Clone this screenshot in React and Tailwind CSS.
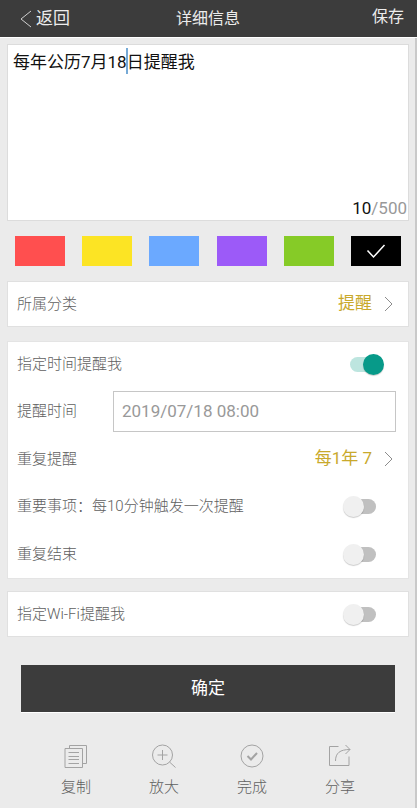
import React, { useState } from 'react';

const COLORS = [
  { name: '红色', bg: 'bg-[#ff4f4f]' },
  { name: '黄色', bg: 'bg-[#fce424]' },
  { name: '蓝色', bg: 'bg-[#6ba9ff]' },
  { name: '紫色', bg: 'bg-[#9c5af8]' },
  { name: '绿色', bg: 'bg-[#86cb27]' },
  { name: '黑色', bg: 'bg-black' },
];

const Chevron = () => (
  <svg className="ml-3 h-4 w-3" viewBox="0 0 12 16" fill="none" stroke="#8c8c8c" aria-hidden="true">
    <path d="M1 1 L8 8 L1 15" />
  </svg>
);

const Switch = ({ id, checked, onChange }) => (
  <input
    id={id}
    type="checkbox"
    role="switch"
    checked={checked}
    onChange={(e) => onChange(e.target.checked)}
    className={`relative h-[15px] w-[30px] appearance-none rounded-full before:absolute before:-top-[3px] before:size-[21px] before:rounded-full before:shadow-[0_1px_1px_rgba(0,0,0,0.2)] ${
      checked
        ? 'mr-4 bg-[#bde5df] before:-right-1 before:bg-[#079a89]'
        : 'mr-5 bg-[#c0c0c0] before:-left-[3px] before:bg-[#f0f0f0]'
    }`}
  />
);

const SwitchRow = ({ id, label, checked, onChange, className }) => (
  <div className={`flex items-center justify-between ${className}`}>
    <label htmlFor={id}>{label}</label>
    <Switch id={id} checked={checked} onChange={onChange} />
  </div>
);

const LinkRow = ({ label, value, className }) => (
  <button type="button" className={`flex w-full items-center text-left ${className}`}>
    <span className="flex-1">{label}</span>
    <span className="text-[17px] font-normal text-[#c9a92c]">{value}</span>
    <Chevron />
  </button>
);

const ToolButton = ({ label, children }) => (
  <button type="button" className="flex flex-col items-center gap-2">
    <svg className="size-6" viewBox="0 0 24 24" fill="none" stroke="#a3a3a3" aria-hidden="true">
      {children}
    </svg>
    <span>{label}</span>
  </button>
);

const App = () => {
  const [text, setText] = useState('每年公历7月18日提醒我');
  const [color, setColor] = useState('黑色');
  const [time, setTime] = useState('2019/07/18 08:00');
  const [timed, setTimed] = useState(true);
  const [important, setImportant] = useState(false);
  const [ends, setEnds] = useState(false);
  const [wifi, setWifi] = useState(false);

  return (
    <div className="min-h-screen bg-[#ebebeb] font-['Roboto','Noto_Sans_CJK_SC',sans-serif] text-[15px] font-light text-[#606060]">
      {/* Header */}
      <header className="grid h-[38px] grid-cols-3 items-center border-b border-white bg-[#3c3c3c] pr-[13px] pl-5 text-base font-normal text-[#ececec]">
        <button type="button" className="flex items-center gap-1 justify-self-start text-[17px]">
          <svg className="h-[18px] w-3" viewBox="0 0 12 18" fill="none" stroke="#cfcfcf" aria-hidden="true">
            <path d="M11 1 L1 9 L11 17" />
          </svg>
          返回
        </button>
        <h1 className="justify-self-center pr-2">详细信息</h1>
        <button type="button" className="justify-self-end pb-1">保存</button>
      </header>

      <main className="min-h-[calc(100vh-38px)] border-r-2 border-[#c9c9c9] pt-[6px] pr-[6px] pl-[7px]">
        {/* Note text */}
        <div className="relative flex h-[177px] flex-col border border-[#dcdcdc] bg-white text-[17px] font-normal">
          <textarea
            aria-label="提醒内容"
            value={text}
            onChange={(e) => setText(e.target.value)}
            maxLength={500}
            className="flex-1 resize-none px-[5px] pt-[5px] leading-6 text-[#111] outline-none"
          />
          <span className="absolute top-[3px] left-[118px] h-[26px] w-[2px] bg-[#76aad6]" />
          <p className="pr-px text-right leading-6 text-[#999]">
            <span className="text-[#111]">10</span>/500
          </p>
        </div>

        {/* Colour picker */}
        <div className="mt-[15px] flex justify-between px-2">
          {COLORS.map((c) => (
            <button
              key={c.name}
              type="button"
              aria-label={c.name}
              aria-pressed={color === c.name}
              onClick={() => setColor(c.name)}
              className={`flex h-[30px] w-[50px] items-center justify-center ${c.bg}`}
            >
              {color === c.name && (
                <svg className="h-4 w-5" viewBox="0 0 20 16" fill="none" stroke="#fff" strokeWidth="1.5" aria-hidden="true">
                  <path d="M1.500 7.500 L7.500 14 L18.500 2" />
                </svg>
              )}
            </button>
          ))}
        </div>

        <section className="mt-[15px] border border-[#e0e0e0] bg-white px-[9px]">
          <LinkRow label="所属分类" value="提醒" className="h-11 pr-[3px]" />
        </section>

        {/* Reminder settings */}
        <section className="mt-[14px] border border-[#e4e4e4] bg-white px-[9px]">
          <SwitchRow id="timed" label="指定时间提醒我" checked={timed} onChange={setTimed} className="h-11 pr-[3px]" />
          <div className="flex h-[50px] items-center">
            <label htmlFor="time" className="w-24 shrink-0">提醒时间</label>
            <input
              id="time"
              type="text"
              value={time}
              onChange={(e) => setTime(e.target.value)}
              className="mr-[3px] h-[41px] min-w-0 flex-1 border border-[#c6c6c6] px-2 text-[17px] font-normal text-[#999] outline-none"
            />
          </div>
          <LinkRow label="重复提醒" value="每1年 7" className="h-[46px] pr-[3px]" />
          <SwitchRow
            id="important"
            label="重要事项：每10分钟触发一次提醒"
            checked={important}
            onChange={setImportant}
            className="h-12 pr-[3px]"
          />
          <SwitchRow id="ends" label="重复结束" checked={ends} onChange={setEnds} className="h-12 pr-[3px]" />
        </section>

        <section className="mt-3 border border-[#e0e0e0] bg-white px-[9px]">
          <SwitchRow id="wifi" label="指定Wi-Fi提醒我" checked={wifi} onChange={setWifi} className="h-11 pr-[3px]" />
        </section>

        <div className="mt-7 px-[14px]">
          <button type="button" className="h-12 w-full border-b border-white bg-[#3c3c3c] text-[17px] font-normal text-white">
            确定
          </button>
        </div>

        {/* Bottom tools */}
        <nav className="mt-[31px] grid grid-cols-4 px-[25px]">
          <ToolButton label="复制">
            <path d="M1 4.500 H18.500 V23.500 H1 Z M5.500 4.500 V1.500 H22.500 V19.500 H18.500 M4.500 8.500 H15 M4.500 12.500 H15 M4.500 15.500 H15 M4.500 19.500 H15" />
          </ToolButton>
          <ToolButton label="放大">
            <circle cx="10.500" cy="11" r="10" />
            <path d="M10.500 6 V16 M5.500 11 H15.500 M17.500 18 L23.500 23.500" />
          </ToolButton>
          <ToolButton label="完成">
            <circle cx="12" cy="12" r="11" />
            <path d="M7.500 12 L11 15.500 L17 9" strokeWidth="2" />
          </ToolButton>
          <ToolButton label="分享">
            <path d="M10.500 2.500 H1.500 V21.500 H21 V12.500 M7.500 17 C7.500 9 12 5.500 22 5.500 M17.500 1 L22 5.500 L17.500 10" />
          </ToolButton>
        </nav>
      </main>
    </div>
  );
};

export default App;
